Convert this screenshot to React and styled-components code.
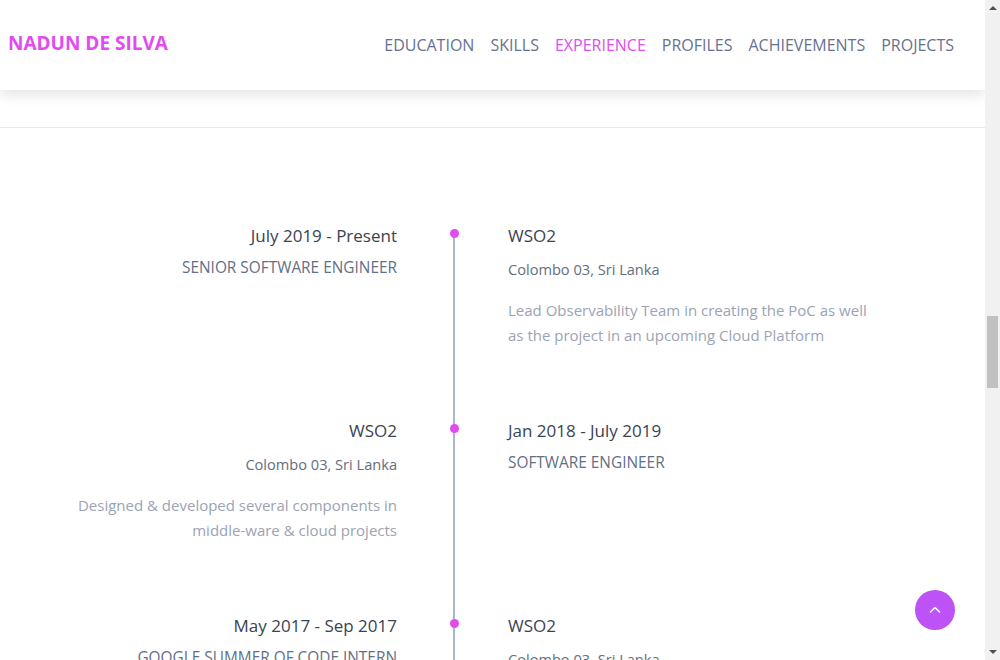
import React from 'react';
import styled, { createGlobalStyle } from 'styled-components';

const GlobalStyle = createGlobalStyle`
  html, body {
    margin: 0;
    padding: 0;
    background: #ffffff;
  }
  body {
    font-family: "Open Sans", "Liberation Sans", sans-serif;
    padding-right: 15px;
  }
`

const Header = styled.header`
  align-items: center;
  background: #ffffff;
  box-shadow: 0 4px 14px rgba(0, 0, 0, 0.12);
  display: flex;
  height: 90px;
  justify-content: space-between;
  padding: 0 31px 0 8px;
  position: sticky;
  top: 0;
  z-index: 10;
`

const Logo = styled.div`
  color: #e04cf0;
  font-size: 19px;
  font-weight: 700;
  margin-top: -4px;
`

const Nav = styled.nav`
  display: flex;
  gap: 16px;
`

const NavItem = styled.a`
  color: ${props => props.active ? '#e04cf0' : '#677290'};
  font-size: 16px;
  text-transform: uppercase;
  cursor: pointer;
`

const Divider = styled.hr`
  border: none;
  border-top: 1px solid #e6e9f2;
  margin: 37px 0 0 0;
`

const Timeline = styled.section`
  margin-left: 27px;
  padding-top: 95px;
  width: 851px;
`

const Row = styled.div`
  display: grid;
  grid-template-columns: 370px 111px 370px;
  min-height: 195px;
`

const Side = styled.div`
  text-align: ${props => props.right ? 'left' : 'right'};
`

const Track = styled.div`
  position: relative;

  &::before {
    background: #a9b8c8;
    bottom: 0;
    content: '';
    left: 56px;
    position: absolute;
    top: ${props => props.first ? '8px' : '0'};
    width: 2px;
  }

  &::after {
    background: #e04cf0;
    border-radius: 50%;
    content: '';
    height: 9px;
    left: 52.5px;
    position: absolute;
    top: 6px;
    width: 9px;
  }
`

const Heading = styled.div`
  color: #3a4351;
  font-size: 17px;
  line-height: 26px;
`

const Role = styled.div`
  color: #627087;
  font-size: 15.4px;
  font-weight: 400;
  line-height: 22px;
  margin-top: 8px;
  text-transform: uppercase;
`

const Location = styled.div`
  color: #636e80;
  font-size: 14.6px;
  line-height: 21px;
  margin-top: 10px;
`

const Description = styled.p`
  color: #9ba3b4;
  font-size: 15px;
  line-height: 25px;
  margin: 18px 0 0 0;
`

const ScrollTop = styled.button`
  align-items: center;
  background: #bd52f6;
  border: none;
  border-radius: 50%;
  bottom: 30px;
  display: flex;
  height: 40px;
  justify-content: center;
  padding: 0;
  position: fixed;
  right: 45px;
  width: 40px;
  z-index: 20;
`

/* browser scrollbar as it shows in the screenshot */
const Scrollbar = styled.div`
  background: #f1f1f1;
  bottom: 0;
  display: flex;
  flex-direction: column;
  position: fixed;
  right: 0;
  top: 0;
  width: 15px;
  z-index: 30;
`

const ScrollArrow = styled.div`
  align-items: center;
  display: flex;
  flex: 0 0 15px;
  justify-content: center;
`

const ScrollTrack = styled.div`
  flex: 1;
  padding: 0 2px;
`

const Thumb = styled.div`
  background: #c1c1c1;
  height: 72px;
  margin-top: 301px;
`

const navItems = ['Education', 'Skills', 'Experience', 'Profiles', 'Achievements', 'Projects']

const jobs = [
  {
    date: 'July 2019 - Present',
    role: 'Senior Software Engineer',
    company: 'WSO2',
    location: 'Colombo 03, Sri Lanka',
    text: 'Lead Observability Team in creating the PoC as well as the project in an upcoming Cloud Platform',
  },
  {
    date: 'Jan 2018 - July 2019',
    role: 'Software Engineer',
    company: 'WSO2',
    location: 'Colombo 03, Sri Lanka',
    text: 'Designed & developed several components in middle-ware & cloud projects',
  },
  {
    date: 'May 2017 - Sep 2017',
    role: 'Google Summer of Code Intern',
    company: 'WSO2',
    location: 'Colombo 03, Sri Lanka',
    text: 'Worked on the Siddhi stream processing engine as a GSoC intern',
  },
]

const Period = ({ job, right }) => (
  <Side right={right}>
    <Heading>{job.date}</Heading>
    <Role>{job.role}</Role>
  </Side>
)

const Company = ({ job, right }) => (
  <Side right={right}>
    <Heading>{job.company}</Heading>
    <Location>{job.location}</Location>
    <Description>{job.text}</Description>
  </Side>
)

const App = () => (
  <>
    <GlobalStyle />
    <Header>
      <Logo>NADUN DE SILVA</Logo>
      <Nav>
        {navItems.map(item => (
          <NavItem key={item} active={item === 'Experience'}>{item}</NavItem>
        ))}
      </Nav>
    </Header>
    <Divider />
    <Timeline>
      {jobs.map((job, i) => {
        const flip = i % 2 === 1
        return (
          <Row key={job.date}>
            {flip ? <Company job={job} /> : <Period job={job} />}
            <Track first={i === 0} />
            {flip ? <Period job={job} right /> : <Company job={job} right />}
          </Row>
        )
      })}
    </Timeline>
    <ScrollTop aria-label="Scroll to top">
      <svg width="14" height="14" viewBox="0 0 14 14" fill="none">
        <polyline points="2.5,9 7,4.5 11.5,9" stroke="#ffffff" strokeWidth="1.6" strokeLinecap="round" strokeLinejoin="round" />
      </svg>
    </ScrollTop>
    <Scrollbar>
      <ScrollArrow>
        <svg width="8" height="5" viewBox="0 0 8 5"><polygon points="0,5 4,1 8,5" fill="#505050" /></svg>
      </ScrollArrow>
      <ScrollTrack><Thumb /></ScrollTrack>
      <ScrollArrow>
        <svg width="8" height="5" viewBox="0 0 8 5"><polygon points="0,0 8,0 4,4" fill="#505050" /></svg>
      </ScrollArrow>
    </Scrollbar>
  </>
)

export default App
